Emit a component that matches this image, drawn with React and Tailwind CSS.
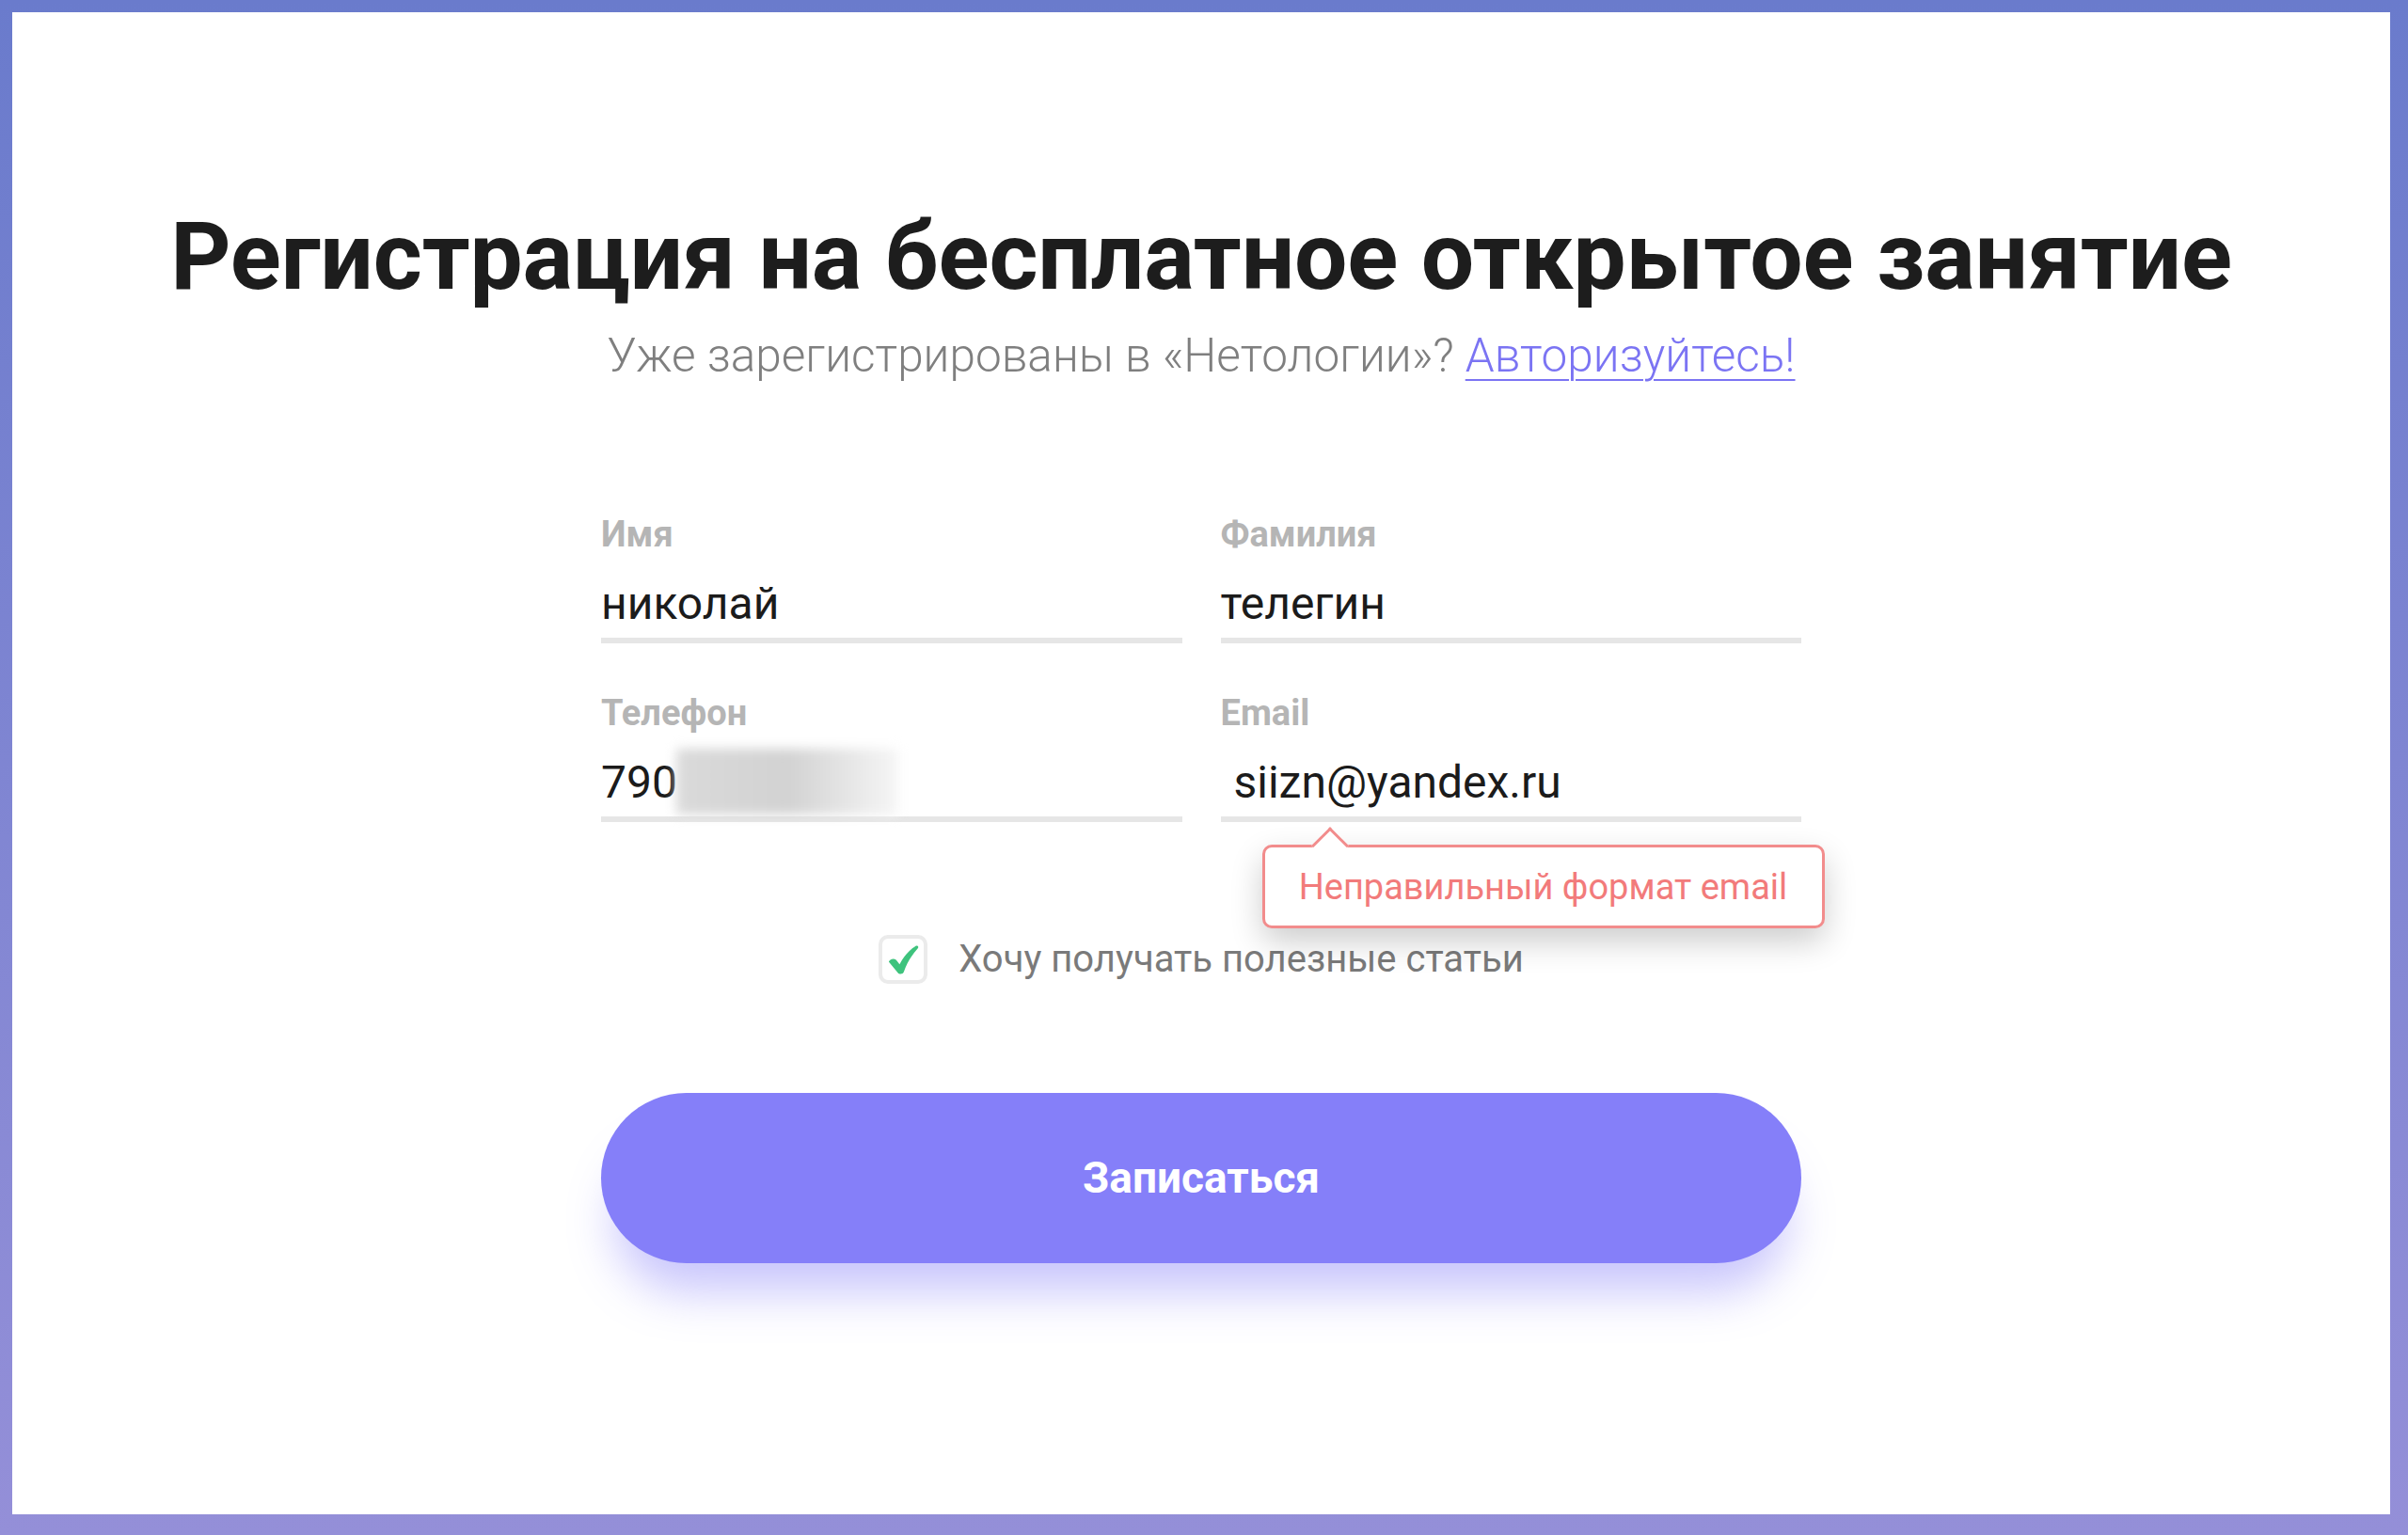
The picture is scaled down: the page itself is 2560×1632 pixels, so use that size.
import { useState } from "react";

const Field = ({ label, value, valueClass = "", children }) => (
	<div className="relative flex flex-col">
		<span className="text-[38px] leading-[38px] font-bold text-[#b5b5b5]">{label}</span>
		<div className={`relative mt-[31px] flex items-center h-[48px] text-[48px] leading-[48px] text-[#1b1b1b] ${valueClass}`}>
			{value}
		</div>
		<div className="mt-[12px] h-[6px] bg-[#e6e6e6]" />
		{children}
	</div>
);

const CheckIcon = () => (
	<svg viewBox="0 0 32 30" className="w-[33px] h-[31px]">
		<path
			d="M0.8 17 C2.5 14 6 13.2 8.6 15.2 L12 19.6 C16 11.5 22 4.8 28.4 0.9 C30.4 -0.2 32.2 1.6 30.8 3.2 C24.5 10 19.4 18.5 16.4 27.4 C15.4 30 11.6 30.2 10 28 Z"
			fill="#3ec37d"
		/>
	</svg>
);

const App = () => {
	const [subscribe, setSubscribe] = useState(true);

	return (
		<div className="min-h-screen bg-gradient-to-b from-[#6a7bcc] to-[#948fd8] pt-[13px] pl-[13px] pr-[19px] pb-[22px] font-['Roboto',sans-serif]">
			<div className="h-[1597px] bg-white flex flex-col items-center">
				{/* Heading */}
				<h1 className="mt-[210px] text-[100px] leading-[100px] font-bold text-[#1d1d1d] tracking-[-0.2px]">
					Регистрация на бесплатное открытое занятие
				</h1>
				<p className="mt-[31px] text-[49.5px] leading-[49px] font-light text-[#7f7f7f]">
					Уже зарегистрированы в «Нетологии»?{" "}
					<a href="#" className="text-[#7b74f3] underline decoration-2 underline-offset-[8px]">
						Авторизуйтесь!
					</a>
				</p>

				{/* Form */}
				<form className="mt-[146px] w-[1276px] flex flex-col" onSubmit={(e) => e.preventDefault()}>
					<div className="grid grid-cols-2 gap-x-[41px] gap-y-[55px]">
						<Field label="Имя" value="николай" />
						<Field label="Фамилия" value="телегин" />
						<Field
							label="Телефон"
							value={
								<>
									<span>790</span>
									{/* blurred digits */}
									<span className="absolute left-[80px] -top-[12px] h-[70px] w-[236px] bg-gradient-to-r from-[#dadada] via-[#d2d2d2] to-[#f6f6f6] blur-[6px]" />
								</>
							}
						/>
						<Field label="Email" value="siizn@yandex.ru" valueClass="pl-[14px]">
							{/* Validation tooltip */}
							<div className="absolute left-[44px] top-[calc(100%+24px)] w-[598px] h-[89px] rounded-[10px] border-[3px] border-[#f28c8c] bg-white shadow-[0_14px_34px_rgba(0,0,0,0.2)] flex items-center justify-center z-10">
								<span className="text-[38px] leading-[38px] text-[#f27b7b]">Неправильный формат email</span>
								<div className="absolute -top-[16px] left-[55px] w-[28px] h-[28px] rotate-45 bg-white border-t-[3px] border-l-[3px] border-[#f28c8c]" />
							</div>
						</Field>
					</div>

					{/* Checkbox */}
					<label className="mt-[120px] self-center flex items-center gap-[33px] cursor-pointer">
						<button
							type="button"
							onClick={() => setSubscribe(!subscribe)}
							className="w-[52px] h-[52px] rounded-[10px] border-[4px] border-[#ebebeb] bg-white flex items-center justify-center"
						>
							{subscribe && <CheckIcon />}
						</button>
						<span className="text-[40px] leading-[40px] text-[#7a7a7a]">Хочу получать полезные статьи</span>
					</label>

					{/* Submit */}
					<button
						type="submit"
						className="mt-[116px] h-[181px] w-full rounded-full bg-[#857ff9] text-white text-[46px] font-bold shadow-[0_45px_50px_-15px_rgba(133,127,249,0.45)]"
					>
						Записаться
					</button>
				</form>
			</div>
		</div>
	);
};

export default App;
